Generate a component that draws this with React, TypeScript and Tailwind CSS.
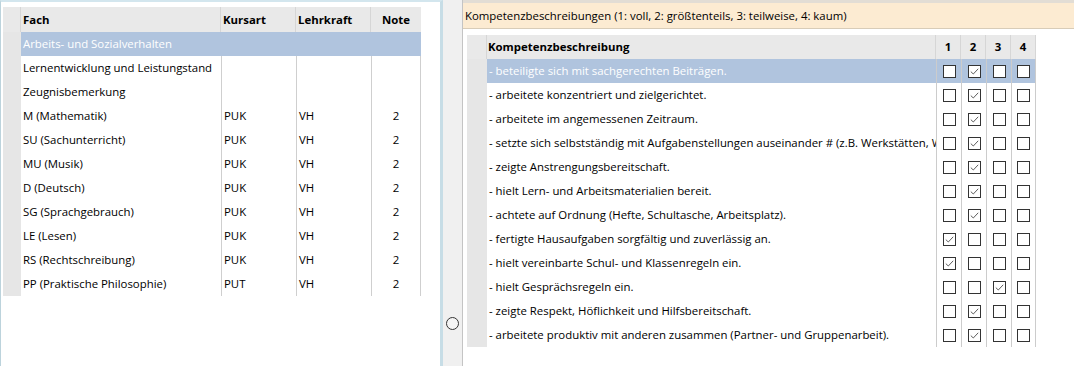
import React from "react";

const leftRows = [
  { fach: "Arbeits- und Sozialverhalten", kurs: "", lehr: "", note: "", sel: true },
  { fach: "Lernentwicklung und Leistungstand", kurs: "", lehr: "", note: "" },
  { fach: "Zeugnisbemerkung", kurs: "", lehr: "", note: "" },
  { fach: "M (Mathematik)", kurs: "PUK", lehr: "VH", note: "2" },
  { fach: "SU (Sachunterricht)", kurs: "PUK", lehr: "VH", note: "2" },
  { fach: "MU (Musik)", kurs: "PUK", lehr: "VH", note: "2" },
  { fach: "D (Deutsch)", kurs: "PUK", lehr: "VH", note: "2" },
  { fach: "SG (Sprachgebrauch)", kurs: "PUK", lehr: "VH", note: "2" },
  { fach: "LE (Lesen)", kurs: "PUK", lehr: "VH", note: "2" },
  { fach: "RS (Rechtschreibung)", kurs: "PUK", lehr: "VH", note: "2" },
  { fach: "PP (Praktische Philosophie)", kurs: "PUT", lehr: "VH", note: "2" },
];

const rightRows: { t: string; c: number; sel?: boolean }[] = [
  { t: "- beteiligte sich mit sachgerechten Beiträgen.", c: 2, sel: true },
  { t: "- arbeitete konzentriert und zielgerichtet.", c: 2 },
  { t: "- arbeitete im angemessenen Zeitraum.", c: 2 },
  { t: "- setzte sich selbstständig mit Aufgabenstellungen auseinander # (z.B. Werkstätten, W", c: 2 },
  { t: "- zeigte Anstrengungsbereitschaft.", c: 2 },
  { t: "- hielt Lern- und Arbeitsmaterialien bereit.", c: 2 },
  { t: "- achtete auf Ordnung (Hefte, Schultasche, Arbeitsplatz).", c: 2 },
  { t: "- fertigte Hausaufgaben sorgfältig und zuverlässig an.", c: 1 },
  { t: "- hielt vereinbarte Schul- und Klassenregeln ein.", c: 1 },
  { t: "- hielt Gesprächsregeln ein.", c: 3 },
  { t: "- zeigte Respekt, Höflichkeit und Hilfsbereitschaft.", c: 2 },
  { t: "- arbeitete produktiv mit anderen zusammen (Partner- und Gruppenarbeit).", c: 2 },
];

function Box({ checked }: { checked: boolean }) {
  return (
    <svg width="13" height="13" viewBox="0 0 13 13" className="block">
      <rect x="0.5" y="0.5" width="12" height="12" fill="#ffffff" stroke="#333333" strokeWidth="1" />
      {checked && (
        <path d="M2.8 6.6 L5.3 9 L10.2 3.8" fill="none" stroke="#5e5e5e" strokeWidth="1" />
      )}
    </svg>
  );
}

export default function App() {
  return (
    <div
      className="w-[1074px] h-[366px] flex bg-white overflow-hidden text-black text-[11.4px]"
      style={{ fontFamily: '"Open Sans", "Noto Sans", sans-serif' }}
    >
      {/* Left panel */}
      <div className="w-[443px] h-full shrink-0 border-t-2 border-t-[#d3e6ee] border-l border-l-[#bcd3dc] border-r-[3px] border-r-[#c7dde6] pl-[2px] pt-[5px] bg-white">
        <div className="w-[418px] flex flex-col">
          <div className="flex h-[25px] bg-[#e9e9e9] font-bold">
            <div className="w-[18px] border-r border-[#d6d6d6]" />
            <div className="w-[200px] pl-[2px] flex items-center border-r border-[#d6d6d6]">Fach</div>
            <div className="w-[75px] pl-[2px] flex items-center border-r border-[#d6d6d6]">Kursart</div>
            <div className="w-[75px] pl-[2px] flex items-center border-r border-[#d6d6d6]">Lehrkraft</div>
            <div className="w-[50px] flex items-center justify-center">Note</div>
          </div>
          {leftRows.map((r, i) => (
            <div key={i} className="flex h-[24px]">
              <div className="w-[18px] bg-[#e6e6e6] shrink-0" />
              <div className={`flex ${r.sel ? "bg-[#b0c4de] text-white" : ""}`}>
                <div className="w-[200px] pl-[2px] flex items-center whitespace-nowrap overflow-hidden">{r.fach}</div>
                <div className={`w-[75px] pl-[2px] flex items-center border-l ${r.sel ? "border-[#b0c4de]" : "border-[#cfcfcf]"}`}>{r.kurs}</div>
                <div className={`w-[75px] pl-[2px] flex items-center border-l ${r.sel ? "border-[#b0c4de]" : "border-[#cfcfcf]"}`}>{r.lehr}</div>
                <div className={`w-[50px] flex items-center justify-center border-l border-r ${r.sel ? "border-[#b0c4de]" : "border-[#cfcfcf]"}`}>{r.note}</div>
              </div>
            </div>
          ))}
        </div>
      </div>

      {/* Splitter */}
      <div className="w-[19px] h-full shrink-0 bg-[#f0f0f0] flex flex-col items-center pt-[317px]">
        <div className="w-[13px] h-[13px] rounded-full border border-[#333333] bg-[#f4f4f4]" />
      </div>

      {/* Right panel */}
      <div className="flex-1 h-full border-l border-[#c4c4c4] flex flex-col bg-white">
        <div className="h-[3px] bg-[#e2ddd5]" />
        <div className="h-[26px] bg-[#fcebd2] border-b border-[#d8ccb8] flex items-center pl-[2px]">
          Kompetenzbeschreibungen (1: voll, 2: größtenteils, 3: teilweise, 4: kaum)
        </div>
        <div className="pl-[4px] pt-[6px]">
          <div className="w-[569px] flex flex-col">
            <div className="flex h-[24px] bg-[#e9e9e9] font-bold">
              <div className="w-[20px] border-r border-[#d6d6d6]" />
              <div className="w-[449px] pl-[1px] flex items-center border-r border-[#d6d6d6]">Kompetenzbeschreibung</div>
              {[1, 2, 3, 4].map((n) => (
                <div key={n} className="w-[25px] flex items-center justify-center border-r border-[#d6d6d6]">{n}</div>
              ))}
            </div>
            {rightRows.map((r, i) => (
              <div key={i} className="flex h-[24px]">
                <div className="w-[20px] bg-[#e6e6e6] shrink-0" />
                <div className={`flex ${r.sel ? "bg-[#b0c4de]" : ""}`}>
                  <div className={`w-[449px] pl-[2px] flex items-center whitespace-nowrap overflow-hidden ${r.sel ? "text-white" : ""}`}>{r.t}</div>
                  {[1, 2, 3, 4].map((n) => (
                    <div key={n} className="w-[25px] flex items-center justify-center border-l border-[#cccccc] last:border-r">
                      <Box checked={r.c === n} />
                    </div>
                  ))}
                </div>
              </div>
            ))}
          </div>
        </div>
      </div>
    </div>
  );
}
